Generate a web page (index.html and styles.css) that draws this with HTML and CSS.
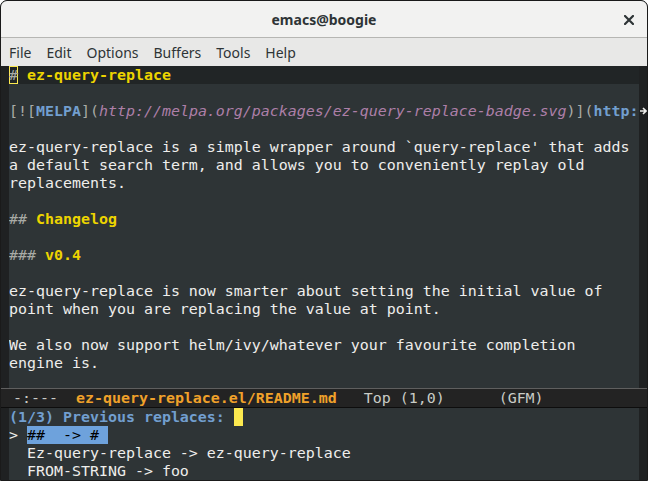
FILE: index.html
```html
<!DOCTYPE html>
<html>
<head>
<meta charset="utf-8">
<link rel="stylesheet" href="styles.css">
</head>
<body>
<div class="window">
  <div class="titlebar">
    <span class="title">emacs@boogie</span>
    <svg class="close" width="10" height="10" viewBox="0 0 10 10"><path d="M1 1 L9 9 M9 1 L1 9" stroke="#2e3436" stroke-width="2.2" stroke-linecap="square"/></svg>
  </div>
  <div class="menubar">
    <span>File</span><span>Edit</span><span>Options</span><span>Buffers</span><span>Tools</span><span>Help</span>
  </div>
  <div class="pane editor">
    <div class="fringe"></div>
    <div class="text">
      <div class="line hl"><span class="cursor-box mk">#</span> <b class="hd">ez-query-replace</b></div>
      <div class="line"> </div>
      <div class="line"><span class="mk">[![</span><b class="bl">MELPA</b><span class="mk">](</span><i class="url">http://melpa.org/packages/ez-query-replace-badge.svg</i><span class="mk">)](</span><b class="bl">http:</b></div>
      <div class="line"> </div>
      <div class="line">ez-query-replace is a simple wrapper around `query-replace' that adds</div>
      <div class="line">a default search term, and allows you to conveniently replay old</div>
      <div class="line">replacements.</div>
      <div class="line"> </div>
      <div class="line"><span class="mk">## </span><b class="hd">Changelog</b></div>
      <div class="line"> </div>
      <div class="line"><span class="mk">### </span><b class="hd">v0.4</b></div>
      <div class="line"> </div>
      <div class="line">ez-query-replace is now smarter about setting the initial value of</div>
      <div class="line">point when you are replacing the value at point.</div>
      <div class="line"> </div>
      <div class="line">We also now support helm/ivy/whatever your favourite completion</div>
      <div class="line">engine is.</div>
      <div class="line"> </div>
    </div>
    <div class="fringe">
      <div class="fline"></div>
      <div class="fline"></div>
      <div class="fline"><svg width="8" height="18" viewBox="0 0 8 18"><path d="M1 9 H6 M4 6 L7 9 L4 12" stroke="#eeeeec" stroke-width="1.6" fill="none"/></svg></div>
    </div>
  </div>
  <div class="modeline"> -:---  <b class="bufname">ez-query-replace.el/README.md</b>   Top (1,0)      (GFM)</div>
  <div class="pane mini">
    <div class="fringe"></div>
    <div class="text">
      <div class="line"><b class="prompt">(1/3) Previous replaces: </b><span class="cursor-solid"> </span></div>
      <div class="line">&gt; <span class="sel">##  -&gt; # </span></div>
      <div class="line">  Ez-query-replace -&gt; ez-query-replace</div>
      <div class="line">  FROM-STRING -&gt; foo</div>
    </div>
    <div class="fringe"></div>
  </div>
</div>
</body>
</html>
```
FILE: styles.css
```css
html, body {
  margin: 0;
  padding: 0;
  background: #ffffff;
}
.window {
  width: 646px;
  height: 479px;
  border: 1px solid #1a1a1a;
  border-radius: 7px 7px 0 0;
  overflow: hidden;
  display: flex;
  flex-direction: column;
  background: #2e3436;
}
.titlebar {
  height: 36px;
  flex: none;
  background: #f2f2f1;
  border-bottom: 1px solid #b6b6b3;
  display: flex;
  align-items: center;
  justify-content: center;
  position: relative;
  font-family: "Noto Sans", "DejaVu Sans", sans-serif;
}
.title {
  font-size: 14px;
  font-weight: bold;
  color: #2e3436;
}
.close {
  position: absolute;
  right: 13px;
  top: 14px;
}
.menubar {
  height: 28px;
  flex: none;
  background: #e8e8e7;
  display: flex;
  align-items: center;
  gap: 15px;
  padding-left: 8px;
  font-family: "Noto Sans", "DejaVu Sans", sans-serif;
  font-size: 14px;
  color: #2e3436;
}
.pane {
  display: grid;
  grid-template-columns: 8px 630px 8px;
  font-family: "DejaVu Sans Mono", monospace;
  font-size: 14.95px;
  line-height: 18px;
  color: #eeeeec;
  overflow: hidden;
}
.editor {
  height: 322px;
  flex: none;
}
.mini {
  flex: 1;
}
.fringe {
  background: #1f2122;
}
.fline {
  height: 18px;
  display: flex;
  align-items: center;
}
.text {
  background: #2e3436;
  overflow: hidden;
}
.line {
  height: 18px;
  white-space: pre;
}
.line.hl {
  background: #212526;
}
.mk {
  color: #a9aba6;
}
.hd {
  color: #edd400;
}
.bl {
  color: #729fcf;
}
.url {
  color: #ad7fa8;
}
.cursor-box {
  box-shadow: inset 0 0 0 1px #fce94f;
}
.modeline {
  height: 18px;
  flex: none;
  background: #232323;
  border-top: 1px solid #5f5f5f;
  border-bottom: 1px solid #0d0d0d;
  padding-left: 3px;
  font-family: "DejaVu Sans Mono", monospace;
  font-size: 14.95px;
  line-height: 18px;
  color: #c9ccc6;
  white-space: pre;
}
.bufname {
  color: #f0a12a;
}
.prompt {
  color: #729fcf;
}
.cursor-solid {
  background: #fce94f;
}
.sel {
  background: #6ea2dc;
  color: #000000;
}
```
